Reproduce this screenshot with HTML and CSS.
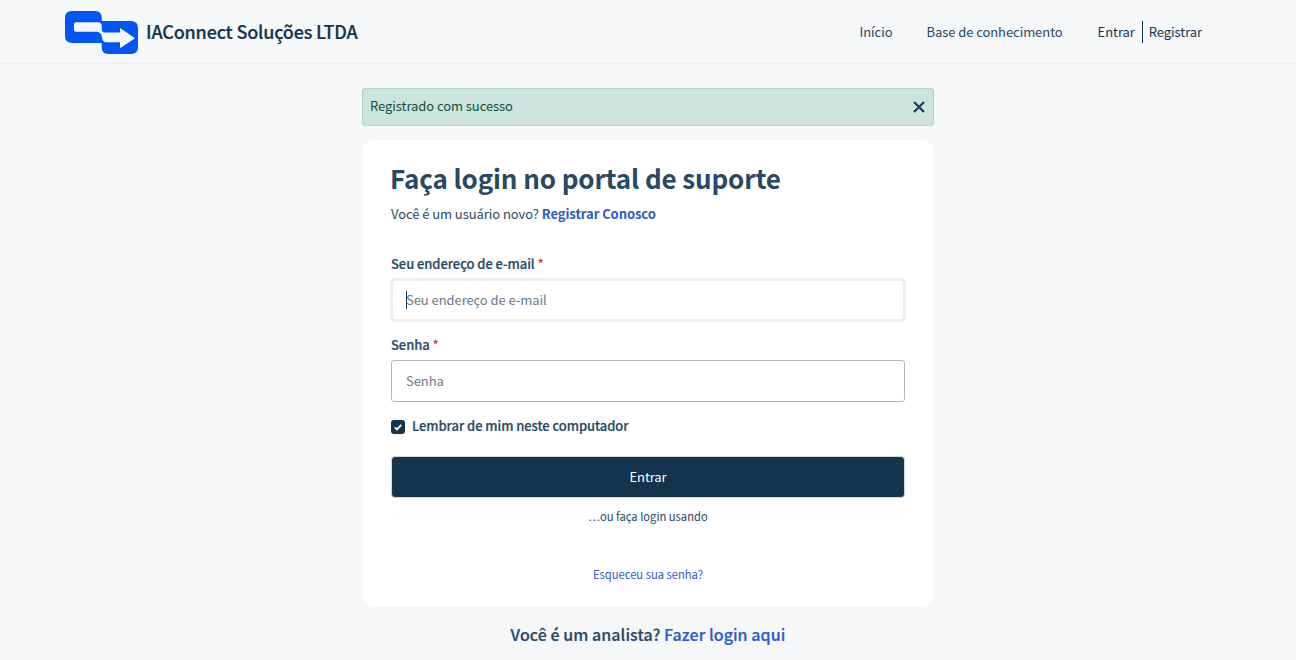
FILE: index.html
```html
<!DOCTYPE html>
<html lang="pt-BR">
<head>
<meta charset="utf-8">
<title>IAConnect Soluções LTDA</title>
<link rel="stylesheet" href="styles.css">
</head>
<body>
<header class="topbar">
  <a class="brand" href="#">
    <svg class="logo" viewBox="0 0 73 43" width="73" height="43" aria-hidden="true">
      <path fill="#0057f5" d="M7 0H30Q36.700 0 36.700 7V10H66Q73 10 73 17V36Q73 43 66 43H43Q36.700 43 36.700 36V32H7Q0 32 0 25V7Q0 0 7 0Z"/>
      <path fill="#f5f7f9" d="M11 11.200H33Q36.700 11.200 36.700 15V18Q36.700 21.500 40 21.500H55V17L70 27.200 55 37.300V31.200H41Q37.500 31.200 37 26.500Q36.500 20.800 31 20.800H11Q9 20.800 9 18.800V13.200Q9 11.200 11 11.200Z"/>
    </svg>
    <span class="brand-name">IAConnect Soluções LTDA</span>
  </a>
  <nav class="nav">
    <a href="#">Início</a>
    <a href="#">Base de conhecimento</a>
    <span class="auth"><a href="#">Entrar</a><a class="reg" href="#">Registrar</a></span>
  </nav>
</header>
<main class="main">
  <div class="alert">
    <span class="alert-text">Registrado com sucesso</span>
    <svg class="close" viewBox="0 0 12 12" width="12" height="12" aria-hidden="true"><path d="M1 1 11 11M11 1 1 11" stroke="#1d3f5a" stroke-width="2.200" fill="none"/></svg>
  </div>
  <section class="card">
    <h1>Faça login no portal de suporte</h1>
    <p class="sub">Você é um usuário novo? <a href="#">Registrar Conosco</a></p>
    <form class="form">
      <label class="label label-email" for="email">Seu endereço de e-mail <i>*</i></label>
      <div class="focus-ring">
        <input id="email" class="input input-focus" type="text" placeholder="Seu endereço de e-mail">
        <span class="caret"></span>
      </div>
      <label class="label label-pass" for="pass">Senha <i>*</i></label>
      <input id="pass" class="input" type="text" placeholder="Senha">
      <div class="remember">
        <span class="check"><svg viewBox="0 0 14 14" width="14" height="14" aria-hidden="true"><path d="M3.800 7.300 6 9.400 10.200 4.900" stroke="#fff" stroke-width="1.800" fill="none"/></svg></span>
        <span class="remember-text">Lembrar de mim neste computador</span>
      </div>
      <button class="btn" type="button">Entrar</button>
      <div class="divider"><span>…ou faça login usando</span></div>
      <a class="forgot" href="#">Esqueceu sua senha?</a>
    </form>
  </section>
  <p class="agent">Você é um analista? <a href="#">Fazer login aqui</a></p>
</main>
</body>
</html>
```
FILE: styles.css
```css
* { box-sizing: border-box; letter-spacing: -0.005em; }
html, body { margin: 0; height: 100%; }
body {
  background: #f5f7f9;
  color: #1d3f5a;
  font-family: "Noto Sans CJK SC", "Noto Sans", sans-serif;
  font-size: 13px;
  overflow: hidden;
}
a { text-decoration: none; color: inherit; }
.topbar {
  height: 64px;
  border-bottom: 1px solid #ebeef2;
  display: flex;
  justify-content: space-between;
  align-items: center;
  padding: 0 94px 0 65px;
}
.brand { display: flex; align-items: center; gap: 8px; color: #12344d; }
.logo { display: block; margin-top: 1px; }
.brand-name { font-size: 18px; font-weight: 500; letter-spacing: -0.01em; padding-bottom: 2px; -webkit-text-stroke: 0.2px #12344d; }
.nav { display: flex; align-items: center; gap: 34px; color: #264966; }
.auth { display: flex; align-items: center; color: #12344d; margin-left: 1px; }
.auth a { line-height: 22px; }
.reg { border-left: 1px solid #12344d; margin-left: 7px; padding-left: 6px; }
.main { width: 572px; margin: 0 auto; padding-top: 24px; }
.alert {
  height: 38px;
  background: #cce4dd;
  border: 1px solid #aed4c8;
  border-radius: 3px;
  color: #0f5040;
  display: flex;
  align-items: center;
  justify-content: space-between;
  padding: 0 8px 0 7px;
}
.alert-text { padding-bottom: 4px; }
.card {
  background: #fff;
  border-radius: 12px;
  margin-top: 14px;
  height: 467px;
  padding: 19px 29px 0;
}
h1 { margin: 0 0 0 -1px; font-size: 26px; font-weight: 700; line-height: 38px; color: #264966; }
.sub { margin: 7px 0 0; line-height: 20px; color: #264966; }
.sub a { color: #2c5cc5; font-weight: 700; }
.form { display: flex; flex-direction: column; }
.label { font-weight: 500; color: #264966; line-height: 20px; -webkit-text-stroke: 0.2px #264966; }
.label i { font-style: normal; color: #d72d30; font-weight: 500; -webkit-text-stroke: 0; }
.label-email { margin-top: 30px; }
.label-pass { margin-top: 14px; }
.focus-ring { position: relative; margin-top: 5px; }
.input {
  display: block;
  width: 100%;
  height: 42px;
  border: 1px solid #a9b8c6;
  border-radius: 3px;
  background: #fff;
  padding: 0 14px 2px;
  font: inherit;
  outline: none;
}
.label-pass + .input { margin-top: 5px; }
.input::placeholder { color: #6b7a88; opacity: 1; }
.input-focus { border: 2px solid #ebeff3; border-radius: 4px; padding: 0 13px 2px; box-shadow: 0 0 0 1px #ebeff3; }
.caret { position: absolute; left: 15px; top: 12px; width: 1px; height: 18px; background: #12344d; }
.remember { display: flex; align-items: center; gap: 7px; margin-top: 15px; height: 20px; font-weight: 500; color: #264966; }
.remember-text { padding-bottom: 4px; -webkit-text-stroke: 0.2px #264966; }
.check { width: 14px; height: 14px; border-radius: 3px; background: #12344d; display: block; }
.check svg { display: block; }
.btn {
  margin-top: 19px;
  height: 42px;
  padding: 0 0 2px;
  background: #12344d;
  border: 1px solid #cfd7df;
  border-radius: 4px;
  color: #fff;
  font: inherit;
}
.divider { position: relative; margin-top: 9px; height: 18px; text-align: center; font-size: 11.2px; letter-spacing: 0; line-height: 18px; color: #264966; }
.divider::before { content: ""; position: absolute; left: 0; right: 0; top: 9px; height: 1px; background: #f9fafb; }
.divider span { position: relative; background: #fff; padding: 0 6px; letter-spacing: 0; }
.forgot { margin-top: 40px; text-align: center; font-size: 11.2px; letter-spacing: 0; line-height: 18px; color: #2c5cc5; }
.agent { margin: 15px 0 0; text-align: center; font-size: 16px; font-weight: 500; letter-spacing: 0.06px; line-height: 24px; color: #264966; -webkit-text-stroke: 0.2px; }
.agent a { color: #2c5cc5; letter-spacing: 0.06px; }
```
